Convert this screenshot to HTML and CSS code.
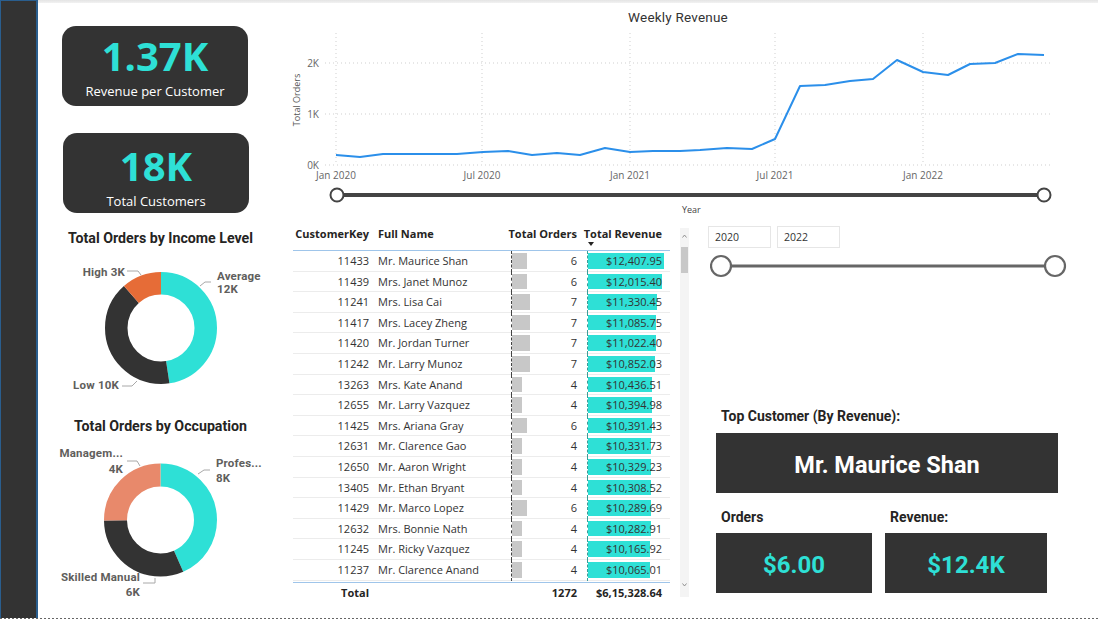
FILE: index.html
```html
<!DOCTYPE html>
<html lang="en">
<head>
<meta charset="utf-8">
<title>Customer Dashboard</title>
<link rel="stylesheet" href="styles.css">
</head>
<body>
<div class="page">
  <div class="frame">
    <aside class="sidebar"></aside>
    <div class="content">
      <div class="topbar"></div>
      <div class="main">
        <section class="left">
          <div class="kpi kpi1">
            <div class="kpi-value">1.37K</div>
            <div class="kpi-label">Revenue per Customer</div>
          </div>
          <div class="kpi kpi2">
            <div class="kpi-value">18K</div>
            <div class="kpi-label">Total Customers</div>
          </div>
          <h3 class="visual-title vt1">Total Orders by Income Level</h3>
          <svg class="donut d1" width="242" height="162" viewBox="0 0 242 162">
            <g transform="rotate(-90 123 80)">
              <circle cx="123" cy="80" r="44.75" fill="none" stroke="#2ee0d6" stroke-width="22.5" stroke-dasharray="133.56 281.17" stroke-dashoffset="0"/>
              <circle cx="123" cy="80" r="44.75" fill="none" stroke="#333333" stroke-width="22.5" stroke-dasharray="114.81 281.17" stroke-dashoffset="-133.56"/>
              <circle cx="123" cy="80" r="44.75" fill="none" stroke="#e66c37" stroke-width="22.5" stroke-dasharray="32.8 281.17" stroke-dashoffset="-248.37"/>
            </g>
            <polyline class="leader" points="89,23 100,23 103,27"/>
            <polyline class="leader" points="173,34 167,34 162,38"/>
            <polyline class="leader" points="84,138 94,138 99,133"/>
            <text class="dl" x="87" y="28" text-anchor="end">High 3K</text>
            <text class="dl" x="179" y="32">Average</text>
            <text class="dl" x="179" y="45">12K</text>
            <text class="dl" x="81" y="141" text-anchor="end">Low 10K</text>
          </svg>
          <h3 class="visual-title vt2">Total Orders by Occupation</h3>
          <svg class="donut d2" width="242" height="172" viewBox="0 0 242 172">
            <g transform="rotate(-90 122.5 84)">
              <circle cx="122.5" cy="84" r="45" fill="none" stroke="#2ee0d6" stroke-width="23" stroke-dasharray="122.52 282.74" stroke-dashoffset="0"/>
              <circle cx="122.5" cy="84" r="45" fill="none" stroke="#333333" stroke-width="23" stroke-dasharray="88.75 282.74" stroke-dashoffset="-122.52"/>
              <circle cx="122.5" cy="84" r="45" fill="none" stroke="#e8896b" stroke-width="23" stroke-dasharray="71.47 282.74" stroke-dashoffset="-211.27"/>
            </g>
            <polyline class="leader" points="89,25 99,25 102,30"/>
            <polyline class="leader" points="172,34 166,34 160,38"/>
            <polyline class="leader" points="105,147 117,147 117,142"/>
            <text class="dl" x="85" y="21" text-anchor="end">Managem...</text>
            <text class="dl" x="85" y="37" text-anchor="end">4K</text>
            <text class="dl" x="178" y="31">Profes...</text>
            <text class="dl" x="178" y="46">8K</text>
            <text class="dl" x="102" y="145" text-anchor="end">Skilled Manual</text>
            <text class="dl" x="102" y="160" text-anchor="end">6K</text>
          </svg>
        </section>

        <section class="center-right">
          <svg class="chart" width="818" height="215" viewBox="0 0 818 215">
            <text class="ch-title" x="398" y="19" text-anchor="middle">Weekly Revenue</text>
            <g class="grid">
              <line x1="45" y1="60" x2="773" y2="60"/>
              <line x1="45" y1="111" x2="773" y2="111"/>
              <line x1="45" y1="162" x2="773" y2="162"/>
              <line x1="56" y1="30" x2="56" y2="162"/>
              <line x1="202" y1="30" x2="202" y2="162"/>
              <line x1="350" y1="30" x2="350" y2="162"/>
              <line x1="495" y1="30" x2="495" y2="162"/>
              <line x1="643" y1="30" x2="643" y2="162"/>
            </g>
            <text class="tick" x="39" y="64" text-anchor="end">2K</text>
            <text class="tick" x="39" y="115" text-anchor="end">1K</text>
            <text class="tick" x="39" y="166" text-anchor="end">0K</text>
            <text class="axis-title" transform="translate(20 97) rotate(-90)" text-anchor="middle">Total Orders</text>
            <text class="tick" x="56" y="176" text-anchor="middle">Jan 2020</text>
            <text class="tick" x="202" y="176" text-anchor="middle">Jul 2020</text>
            <text class="tick" x="350" y="176" text-anchor="middle">Jan 2021</text>
            <text class="tick" x="495" y="176" text-anchor="middle">Jul 2021</text>
            <text class="tick" x="643" y="176" text-anchor="middle">Jan 2022</text>
            <polyline class="series" points="56,152 80,154 103,151 128,151 153,151 177,151 203,149 228,148 252,152 277,150 300,152 325,145 350,149 373,148 400,148 420,147 447,145 472,146 495,136 520,83 545,82 570,78 593,76 617,57 643,69 668,72 690,61 715,60 738,51 764,52"/>
            <line class="range-track" x1="57" y1="192" x2="764" y2="192"/>
            <circle class="range-knob" cx="57" cy="192" r="6.5"/>
            <circle class="range-knob" cx="764" cy="192" r="6.5"/>
            <text class="year" x="402" y="210">Year</text>
          </svg>

          <div class="lower">
            <div class="table-visual">
              <div class="tbl">
                <div class="thead">
                  <span class="th ck">CustomerKey</span>
                  <span class="th nm">Full Name</span>
                  <span class="th ord">Total Orders</span>
                  <span class="th rev sorted">Total Revenue</span>
                </div>
                <div class="tr"><span class="td ck">11433</span><span class="td nm">Mr. Maurice Shan</span><span class="td ord"><i class="bar" style="width:15px"></i><span class="num">6</span></span><span class="td rev"><i class="bar" style="width:76px"></i><span class="num">$12,407.95</span></span></div>
                <div class="tr"><span class="td ck">11439</span><span class="td nm">Mrs. Janet Munoz</span><span class="td ord"><i class="bar" style="width:15px"></i><span class="num">6</span></span><span class="td rev"><i class="bar" style="width:73.6px"></i><span class="num">$12,015.40</span></span></div>
                <div class="tr"><span class="td ck">11241</span><span class="td nm">Mrs. Lisa Cai</span><span class="td ord"><i class="bar" style="width:17.5px"></i><span class="num">7</span></span><span class="td rev"><i class="bar" style="width:69.4px"></i><span class="num">$11,330.45</span></span></div>
                <div class="tr"><span class="td ck">11417</span><span class="td nm">Mrs. Lacey Zheng</span><span class="td ord"><i class="bar" style="width:17.5px"></i><span class="num">7</span></span><span class="td rev"><i class="bar" style="width:67.9px"></i><span class="num">$11,085.75</span></span></div>
                <div class="tr"><span class="td ck">11420</span><span class="td nm">Mr. Jordan Turner</span><span class="td ord"><i class="bar" style="width:17.5px"></i><span class="num">7</span></span><span class="td rev"><i class="bar" style="width:67.5px"></i><span class="num">$11,022.40</span></span></div>
                <div class="tr"><span class="td ck">11242</span><span class="td nm">Mr. Larry Munoz</span><span class="td ord"><i class="bar" style="width:17.5px"></i><span class="num">7</span></span><span class="td rev"><i class="bar" style="width:66.5px"></i><span class="num">$10,852.03</span></span></div>
                <div class="tr"><span class="td ck">13263</span><span class="td nm">Mrs. Kate Anand</span><span class="td ord"><i class="bar" style="width:10px"></i><span class="num">4</span></span><span class="td rev"><i class="bar" style="width:63.9px"></i><span class="num">$10,436.51</span></span></div>
                <div class="tr"><span class="td ck">12655</span><span class="td nm">Mr. Larry Vazquez</span><span class="td ord"><i class="bar" style="width:10px"></i><span class="num">4</span></span><span class="td rev"><i class="bar" style="width:63.7px"></i><span class="num">$10,394.98</span></span></div>
                <div class="tr"><span class="td ck">11425</span><span class="td nm">Mrs. Ariana Gray</span><span class="td ord"><i class="bar" style="width:15px"></i><span class="num">6</span></span><span class="td rev"><i class="bar" style="width:63.6px"></i><span class="num">$10,391.43</span></span></div>
                <div class="tr"><span class="td ck">12631</span><span class="td nm">Mr. Clarence Gao</span><span class="td ord"><i class="bar" style="width:10px"></i><span class="num">4</span></span><span class="td rev"><i class="bar" style="width:63.3px"></i><span class="num">$10,331.73</span></span></div>
                <div class="tr"><span class="td ck">12650</span><span class="td nm">Mr. Aaron Wright</span><span class="td ord"><i class="bar" style="width:10px"></i><span class="num">4</span></span><span class="td rev"><i class="bar" style="width:63.3px"></i><span class="num">$10,329.23</span></span></div>
                <div class="tr"><span class="td ck">13405</span><span class="td nm">Mr. Ethan Bryant</span><span class="td ord"><i class="bar" style="width:10px"></i><span class="num">4</span></span><span class="td rev"><i class="bar" style="width:63.1px"></i><span class="num">$10,308.52</span></span></div>
                <div class="tr"><span class="td ck">11429</span><span class="td nm">Mr. Marco Lopez</span><span class="td ord"><i class="bar" style="width:15px"></i><span class="num">6</span></span><span class="td rev"><i class="bar" style="width:63px"></i><span class="num">$10,289.69</span></span></div>
                <div class="tr"><span class="td ck">12632</span><span class="td nm">Mrs. Bonnie Nath</span><span class="td ord"><i class="bar" style="width:10px"></i><span class="num">4</span></span><span class="td rev"><i class="bar" style="width:63px"></i><span class="num">$10,282.91</span></span></div>
                <div class="tr"><span class="td ck">11245</span><span class="td nm">Mr. Ricky Vazquez</span><span class="td ord"><i class="bar" style="width:10px"></i><span class="num">4</span></span><span class="td rev"><i class="bar" style="width:62.3px"></i><span class="num">$10,165.92</span></span></div>
                <div class="tr"><span class="td ck">11237</span><span class="td nm">Mr. Clarence Anand</span><span class="td ord"><i class="bar" style="width:10px"></i><span class="num">4</span></span><span class="td rev"><i class="bar" style="width:61.7px"></i><span class="num">$10,065.01</span></span></div>
                <div class="tfoot">
                  <span class="tf ck">Total</span>
                  <span class="tf nm"></span>
                  <span class="tf ord">1272</span>
                  <span class="tf rev">$6,15,328.64</span>
                </div>
              </div>
              <div class="vscroll">
                <svg class="arrow" width="9" height="12" viewBox="0 0 9 12"><polyline points="2.5,7.5 4.5,5 6.5,7.5" fill="none" stroke="#888" stroke-width="0.9"/></svg>
                <div class="thumb"></div>
                <div class="spacer"></div>
                <svg class="arrow" width="9" height="12" viewBox="0 0 9 12"><polyline points="2.5,4.5 4.5,7 6.5,4.5" fill="none" stroke="#888" stroke-width="0.9"/></svg>
              </div>
            </div>

            <div class="right-panel">
              <div class="slicer-inputs">
                <div class="slicer-box">2020</div>
                <div class="slicer-box">2022</div>
              </div>
              <svg class="slicer-range" width="358" height="24" viewBox="0 0 358 24">
                <line x1="21" y1="12" x2="335" y2="12" stroke="#666" stroke-width="3"/>
                <circle cx="11" cy="12" r="10" fill="#fff" stroke="#666" stroke-width="2.2"/>
                <circle cx="345" cy="12" r="10" fill="#fff" stroke="#666" stroke-width="2.2"/>
              </svg>
              <div class="tc-title">Top Customer (By Revenue):</div>
              <div class="tc-box">Mr. Maurice Shan</div>
              <div class="sub-row">
                <div class="sub-col c1">
                  <div class="sub-label">Orders</div>
                  <div class="sub-box">$6.00</div>
                </div>
                <div class="sub-col c2">
                  <div class="sub-label">Revenue:</div>
                  <div class="sub-box">$12.4K</div>
                </div>
              </div>
            </div>
          </div>
        </section>
      </div>
    </div>
  </div>
  <div class="bottom-line"></div>
</div>
</body>
</html>
```

FILE: styles.css
```css
* { box-sizing: border-box; margin: 0; padding: 0; }

html, body {
  width: 1098px;
  height: 620px;
  overflow: hidden;
  background: #ffffff;
}

body {
  font-family: "Open Sans", "Noto Sans", sans-serif;
  color: #252423;
}

.page {
  width: 1098px;
  height: 620px;
  display: flex;
  flex-direction: column;
}

.frame {
  height: 618px;
  display: flex;
  flex: none;
}

.sidebar {
  width: 38px;
  flex: none;
  background: #333333;
  border-left: 1px solid #2a5e8e;
  border-right: 2px solid #2a5e8e;
  border-top: 1px solid #2a5e8e;
}

.content {
  flex: 1;
  display: flex;
  flex-direction: column;
  min-width: 0;
}

.topbar {
  height: 3px;
  flex: none;
  background: linear-gradient(#e4e4e4, #f2f2f2);
}

.main {
  flex: 1;
  display: flex;
  min-height: 0;
}

.bottom-line {
  height: 1px;
  flex: none;
  background: repeating-linear-gradient(90deg, #666 0 2px, transparent 2px 4px);
}

/* ---------- Left column ---------- */
.left {
  width: 242px;
  flex: none;
  display: flex;
  flex-direction: column;
}

.kpi {
  width: 186px;
  height: 80px;
  background: #333333;
  border-radius: 14px;
  display: flex;
  flex-direction: column;
  align-items: center;
}

.kpi1 { margin: 23px 0 0 24px; padding-top: 8px; }
.kpi2 { margin: 27px 0 0 25px; padding-top: 11px; }

.kpi-value {
  font-weight: 700;
  font-size: 40px;
  line-height: 44px;
  color: #2ee0d6;
}

.kpi-label {
  font-size: 13px;
  line-height: 18px;
  color: #ffffff;
  margin-top: 4px;
}

.visual-title {
  font-family: Roboto, "Liberation Sans", sans-serif;
  font-weight: 700;
  font-size: 14.2px;
  line-height: 20px;
  text-align: center;
  color: #252423;
  padding-left: 3px;
}

.vt1 { margin-top: 15px; }
.vt2 { margin-top: 6px; }

.donut { display: block; flex: none; }

.leader {
  fill: none;
  stroke: #a8a8a8;
  stroke-width: 1;
}

.dl {
  font-family: Roboto, "Liberation Sans", sans-serif;
  font-weight: 700;
  font-size: 11.5px;
  letter-spacing: 0.2px;
  fill: #605e5c;
}

/* ---------- Chart ---------- */
.center-right {
  flex: 1;
  display: flex;
  flex-direction: column;
  min-width: 0;
}

.chart { display: block; flex: none; }

.ch-title {
  font-family: Roboto, "Liberation Sans", sans-serif;
  font-size: 13.5px;
  letter-spacing: 0.2px;
  fill: #333333;
}

.grid line {
  stroke: #cfcfcf;
  stroke-width: 1;
  stroke-dasharray: 1 3;
}

.tick {
  font-family: "Open Sans", sans-serif;
  font-size: 10px;
  fill: #666666;
}

.axis-title {
  font-family: "Open Sans", sans-serif;
  font-size: 9px;
  fill: #555555;
}

.series {
  fill: none;
  stroke: #2b8fea;
  stroke-width: 2;
  stroke-linejoin: round;
}

.range-track {
  stroke: #444444;
  stroke-width: 4;
}

.range-knob {
  fill: #ffffff;
  stroke: #444444;
  stroke-width: 2;
}

.year {
  font-family: "Open Sans", sans-serif;
  font-size: 9px;
  fill: #444444;
}

/* ---------- Lower area ---------- */
.lower {
  flex: 1;
  display: flex;
  min-height: 0;
}

.table-visual {
  display: flex;
  margin: 8px 0 0 13px;
  flex: none;
}

.tbl {
  width: 377px;
  font-size: 11px;
}

.thead, .tr, .tfoot {
  display: grid;
  grid-template-columns: 80px 135px 75px 87px;
}

.thead {
  height: 25px;
  border-bottom: 1px solid #9fc5ea;
  font-weight: 700;
  line-height: 16px;
}

.tr {
  height: 20.6px;
  border-bottom: 1px solid #ececec;
  line-height: 19.6px;
  color: #333333;
}

.tfoot {
  margin-top: 1px;
  border-top: 1px solid #9fc5ea;
  height: 22px;
  line-height: 20px;
  font-weight: 700;
}

.th, .td, .tf {
  white-space: nowrap;
  position: relative;
}

.ck { text-align: right; padding-right: 4px; }
.nm { padding-left: 5px; }
.ord { text-align: right; padding-right: 6px; }
.rev { text-align: right; padding-right: 8px; }

.sorted::after {
  content: "";
  position: absolute;
  left: 5px;
  top: 16px;
  border-left: 3.5px solid transparent;
  border-right: 3.5px solid transparent;
  border-top: 4px solid #252423;
}

.td.ord::before {
  content: "";
  position: absolute;
  left: 3px;
  top: 0;
  bottom: -1px;
  border-left: 1px dashed #444444;
}

.td.rev::before {
  content: "";
  position: absolute;
  left: 4px;
  top: 0;
  bottom: -1px;
  border-left: 1px dashed #3a9d96;
  z-index: 1;
}

.bar {
  position: absolute;
  top: 2px;
  bottom: 2px;
}

.td.ord .bar { left: 4px; background: #c8c8c8; }
.td.rev .bar { left: 5px; background: #2ee0d6; }

.num { position: relative; }

.vscroll {
  width: 9px;
  height: 369px;
  margin: 2px 0 0 10px;
  background: #f4f4f4;
  display: flex;
  flex-direction: column;
  align-items: center;
  padding: 2px 0 6px;
}

.arrow { display: block; flex: none; }

.thumb {
  width: 7px;
  height: 26px;
  margin-top: 5px;
  background: #c8c8c8;
  flex: none;
}

.spacer { flex: 1; }

/* ---------- Right panel ---------- */
.right-panel {
  flex: 1;
  display: flex;
  flex-direction: column;
  padding-left: 19px;
}

.slicer-inputs {
  display: flex;
  gap: 6px;
  margin-top: 8px;
}

.slicer-box {
  width: 63px;
  height: 22px;
  border: 1px solid #e6e6e6;
  font-size: 10.5px;
  line-height: 20px;
  padding-left: 6px;
  color: #333333;
}

.slicer-range {
  display: block;
  margin: 6px 0 0 2px;
}

.tc-title, .sub-label {
  font-family: Roboto, "Liberation Sans", sans-serif;
  font-weight: 700;
  font-size: 14px;
  line-height: 16px;
  color: #252423;
}

.tc-title {
  margin: 130px 0 0 13px;
}

.tc-box {
  margin: 9px 0 0 8px;
  width: 342px;
  height: 60px;
  background: #333333;
  color: #ffffff;
  display: flex;
  align-items: center;
  justify-content: center;
  padding-top: 3px;
  font-family: Roboto, "Liberation Sans", sans-serif;
  font-weight: 700;
  font-size: 23.5px;
  line-height: 28px;
}

.sub-row {
  display: flex;
  gap: 13px;
  margin: 16px 0 0 8px;
}

.sub-col.c1 { width: 156px; }
.sub-col.c2 { width: 162px; }

.sub-label { padding-left: 5px; }

.sub-box {
  margin-top: 8px;
  height: 60px;
  background: #333333;
  color: #2ee0d6;
  display: flex;
  align-items: center;
  justify-content: center;
  padding-top: 3px;
  font-family: Roboto, "Liberation Sans", sans-serif;
  font-weight: 700;
  font-size: 24px;
  line-height: 28px;
}
```
